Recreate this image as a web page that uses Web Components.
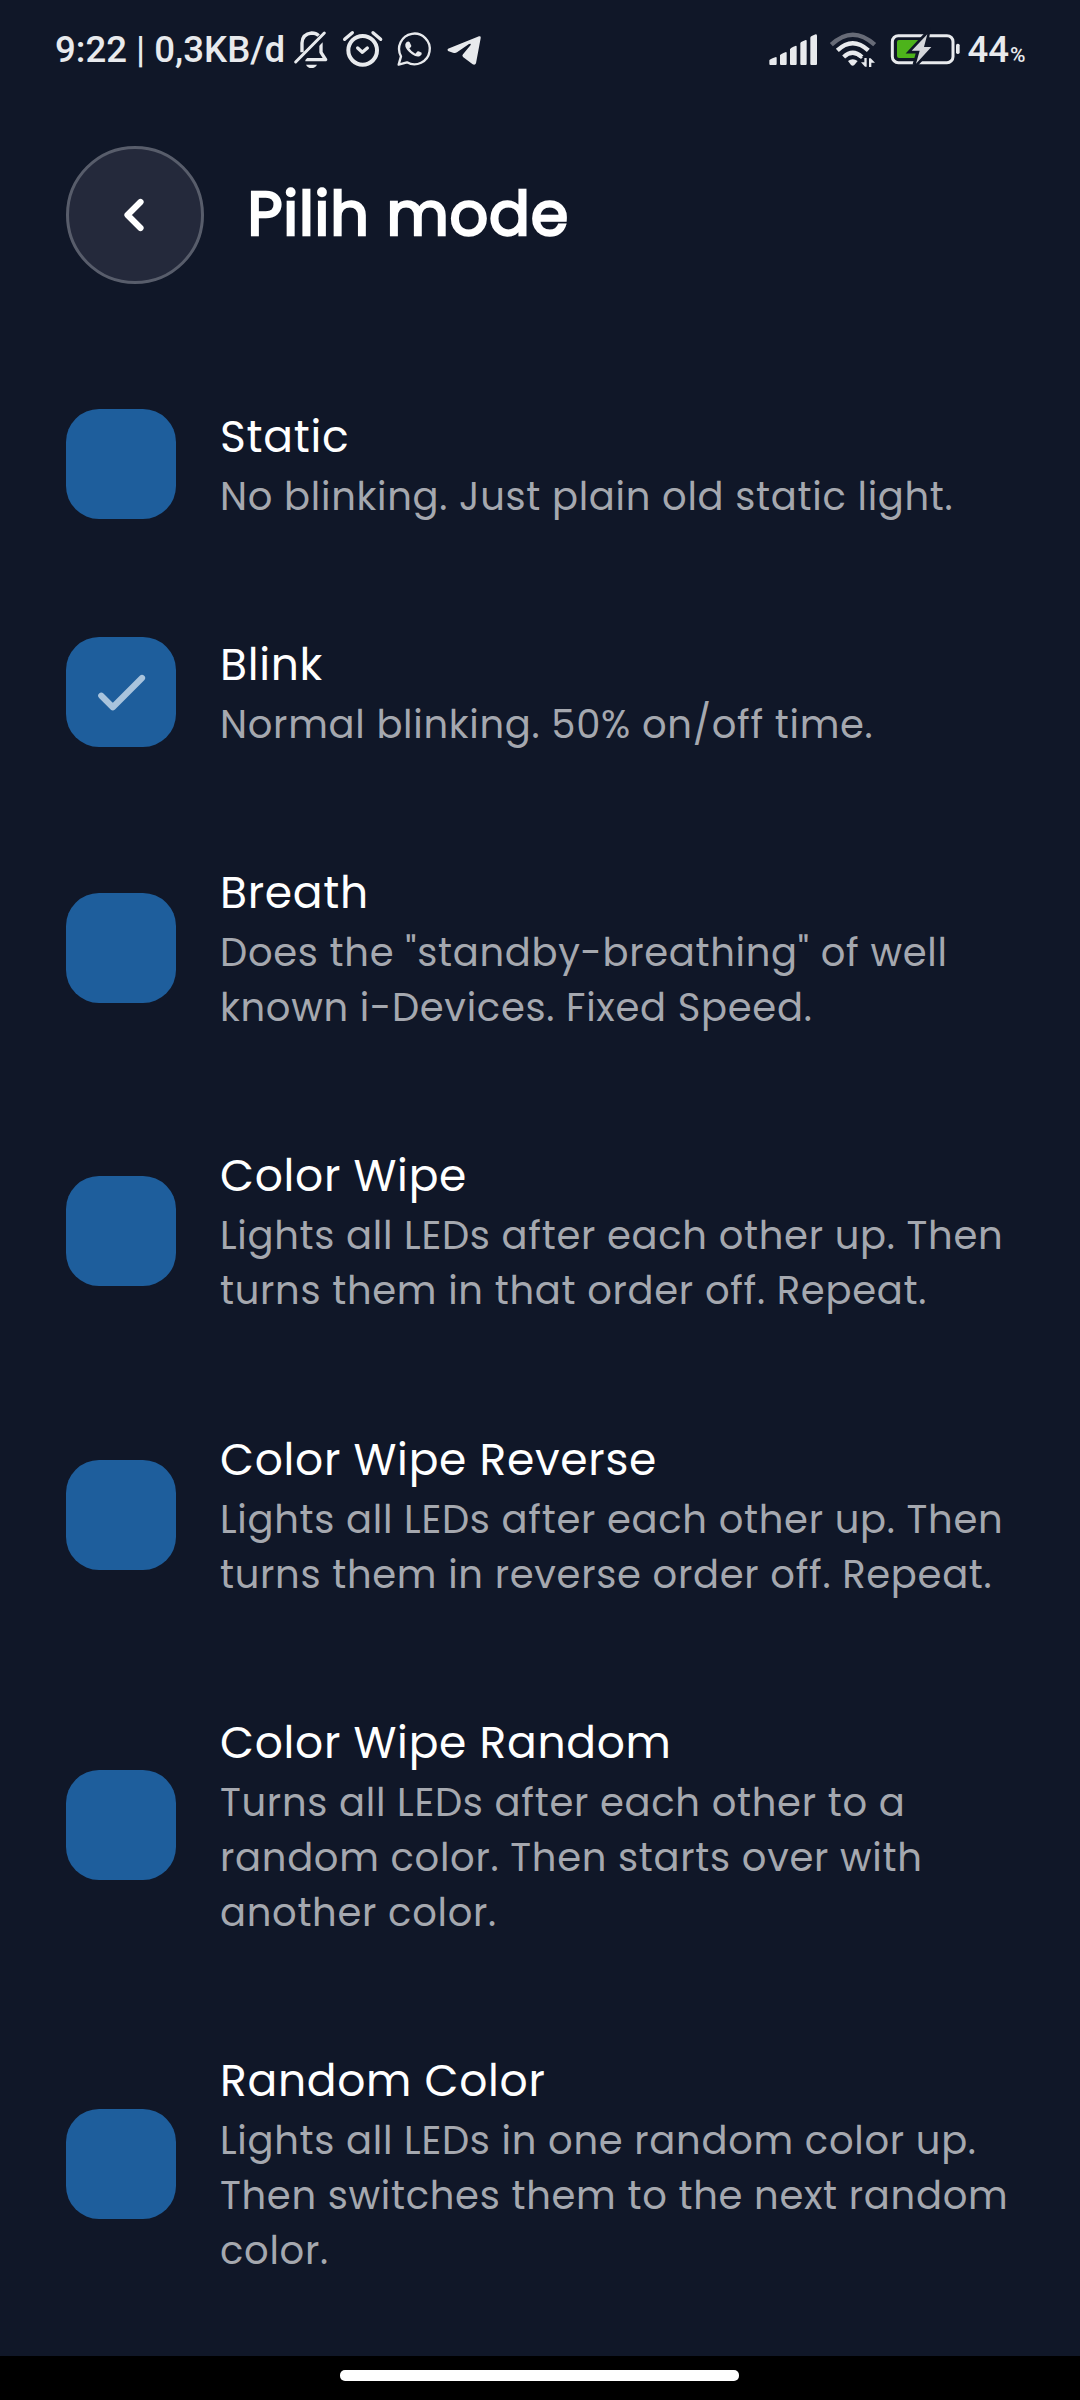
<!DOCTYPE html>
<html lang="id">
<head>
<meta charset="utf-8">
<title>Pilih mode</title>
<style>
html,body{margin:0;background:#101728}
body{font-family:Poppins,Inter,"Noto Sans",sans-serif;color:#fff}
</style>
</head>
<body>
<app-screen>
  <status-bar slot="status"></status-bar>
  <page-header slot="header">Pilih mode</page-header>
  <mode-item><span slot="title">Static</span>No blinking. Just plain old static light.</mode-item>
  <mode-item checked><span slot="title">Blink</span>Normal blinking. 50% on/off time.</mode-item>
  <mode-item><span slot="title">Breath</span>Does the "standby-breathing" of well known i-Devices. Fixed Speed.</mode-item>
  <mode-item><span slot="title">Color Wipe</span>Lights all LEDs after each other up. Then turns them in that order off. Repeat.</mode-item>
  <mode-item><span slot="title">Color Wipe Reverse</span>Lights all LEDs after each other up. Then turns them in reverse order off. Repeat.</mode-item>
  <mode-item><span slot="title">Color Wipe Random</span>Turns all LEDs after each other to a random color. Then starts over with another color.</mode-item>
  <mode-item><span slot="title">Random Color</span>Lights all LEDs in one random color up. Then switches them to the next random color.</mode-item>
  <gesture-bar slot="nav"></gesture-bar>
</app-screen>
<script>
const define = (name, html, connected) => customElements.define(name, class extends HTMLElement {
  constructor() {
    super();
    this.attachShadow({mode: 'open'}).innerHTML = html;
  }
  connectedCallback() { if (connected) connected.call(this); }
});

const ICONS = {
  bell: [36, 120, `<path d="M66 112V84Q67 57 95 54Q108 54 116 62M123 82V112L137 134H76" fill="none" stroke="#e8eaed" stroke-width="10" stroke-linejoin="round"/><path d="M55 150 141 62" stroke="#101728" stroke-width="9"/><path d="M47 141 133 54" stroke="#e8eaed" stroke-width="9" stroke-linecap="round"/><path d="M78 149H111Q106 159 94 159Q83 159 78 149Z"/>`],
  alarm: [186, 126, `<g fill="none" stroke="#e8eaed" stroke-linecap="round" stroke-linejoin="round"><circle cx="248" cy="106" r="43" stroke-width="12"/><path d="M194 73 217 53M279 53 302 73" stroke-width="10"/><path d="M233 99 247 112 262 99" stroke-width="10"/></g>`],
  whatsapp: [345, 114, `<path d="M356 149 363 124A46 46 0 1 1 381 142Z" fill="none" stroke="#e8eaed" stroke-width="7" stroke-linejoin="round"/><path d="M380 81Q386 77 389 82L394 92Q395 95 388 100Q394 111 406 116L413 109Q416 107 425 113Q427 119 420 123Q411 128 396 118Q379 106 376 94Q374 86 380 81Z"/>`],
  telegram: [495, 114, `<path d="M504 101 597 64Q604 62 602 70L588 145Q585 152 578 148L549 126Q545 122 549 118L572 90Q574 84 567 87L531 112Q526 116 519 113L504 108Q501 104 504 101Z"/>`],
  signal: [54, 150, `<path d="M58 136Q58 133 78 126Q80 126 80 129V147Q80 150 77 150H61Q58 150 58 147ZM90 121Q90 118 108 111Q110 111 110 114V147Q110 150 107 150H93Q90 150 90 147ZM120 103Q120 99 138 92Q140 92 140 95V147Q140 150 137 150H123Q120 150 120 147ZM151 85Q151 81 167 75Q170 74 170 78V147Q170 150 167 150H154Q151 150 151 147ZM181 68Q181 64 197 58Q201 58 201 62V147Q201 150 198 150H184Q181 150 181 147Z"/>`],
  wifi: [237, 144, `<g fill="none" stroke-width="13"><path d="M244 89Q308 29 374 89" stroke="#676b77"/><path d="M262 106Q308 63 355 106" stroke="#e8eaed"/><path d="M281 126Q308 101 336 126" stroke="#e8eaed"/></g><path d="M294 138Q308 128 323 138L313 150Q308 154 303 150Z"/><path d="M330 123H380V160H330Z" fill="#101728"/><path d="M343 129H350V155H345L333 142H343ZM357 156V130H362L375 143H364V156Z"/><path d="M317 120 326 116 339 126 333 132Z"/>`],
  battery: [420, 216, `<rect x="427" y="62" width="182" height="81" rx="18" fill="none" stroke="#e8eaed" stroke-width="9"/><path d="M447 75H524L498 129H447Q441 129 441 123V81Q441 75 447 75Z" fill="#4db31b"/><rect x="618" y="86" width="11" height="31" rx="5"/><path d="M532 56 484 108H507L495 150 548 94H526Z" fill="#101728" stroke="#101728" stroke-width="15"/><path d="M532 58 485 107H509L498 146 544 96H522Z" fill="#d5d7db"/>`]
};
define('status-icon', `<style>:host{display:block}svg{display:block}</style>`, function () {
  const [x, w, art] = ICONS[this.getAttribute('name')];
  const holder = document.createElement('div');
  holder.innerHTML = `<svg width="${w / 3}" height="46" viewBox="${x} 36 ${w} 138" fill="#e8eaed">${art}</svg>`;
  this.shadowRoot.replaceChildren(...this.shadowRoot.querySelectorAll('style'), holder.firstChild);
});

define('status-bar', `<style>
:host{display:flex;justify-content:space-between;height:119px;padding:27px 54.5px 0 55px;box-sizing:border-box;font:500 36.6px/46px Roboto,sans-serif;color:#e8eaed}
div{display:flex;height:46px;white-space:nowrap}
.left{gap:10px}.clock{width:227px}
.left status-icon:nth-of-type(2){margin-right:1px}
.left status-icon:nth-of-type(3){margin-right:2px}
.right{align-items:baseline}.right status-icon{align-self:flex-start;margin-right:11px}
.right status-icon:nth-of-type(2){margin-right:13px}.right status-icon:nth-of-type(3){margin-right:5px}
.pct{font-size:21px;margin-left:1px}
</style><div class="left"><span class="clock">9:22 | 0,3KB/d</span><status-icon name="bell"></status-icon><status-icon name="alarm"></status-icon><status-icon name="whatsapp"></status-icon><status-icon name="telegram"></status-icon></div>
<div class="right"><status-icon name="signal"></status-icon><status-icon name="wifi"></status-icon><status-icon name="battery"></status-icon><span>44</span><span class="pct">%</span></div>`);

define('back-button', `<style>:host{display:flex;flex:none;width:138px;height:138px;box-sizing:border-box;border:3px solid #585d6b;border-radius:50%;background:#24293b;align-items:center;justify-content:center}svg{display:block}</style>
<svg width="22" height="40" viewBox="124 195 22 40"><path d="M140.5 202 127.5 215 140.5 228" fill="none" stroke="#fff" stroke-width="6.2" stroke-linecap="round" stroke-linejoin="round"/></svg>`);

define('page-header', `<style>
:host{display:flex;align-items:center;gap:43.5px;padding:27px 66px 66px;height:138px}
h1{margin:0;padding-bottom:3px;font-size:60.5px;font-weight:400;letter-spacing:.75px;line-height:90px;-webkit-text-stroke:2.4px #fff;paint-order:stroke}
</style><back-button></back-button><h1><slot></slot></h1>`);

define('mode-box', `<style>:host{display:block;flex:none;width:110px;height:110px;border-radius:33px;background:#1e5e9c}svg{display:block}path{display:none}:host([checked]) path{display:inline}</style>
<svg width="110" height="110"><path d="M35.3 58.7 46.8 70.2 76 41" fill="none" stroke="#a9c4dd" stroke-width="6.2" stroke-linecap="round" stroke-linejoin="round"/></svg>`);

define('mode-item', `<style>
:host{display:flex;align-items:center;gap:44px;padding:0 60px 0 66px}
.text{flex:1;padding:56.6px 0 54.65px;letter-spacing:.7px}
.title{font-size:44px;line-height:60px;margin-bottom:2px}
.desc{font-size:38.5px;line-height:55px;color:#a5a8af}
</style><mode-box></mode-box><div class="text"><div class="title"><slot name="title"></slot></div><div class="desc"><slot></slot></div></div>`, function () {
  this.shadowRoot.querySelector('mode-box').toggleAttribute('checked', this.hasAttribute('checked'));
});

define('gesture-bar', `<style>:host{display:flex;justify-content:center;height:44px;padding:14px 1px 0 0;box-sizing:border-box;background:#000}div{width:399px;height:11px;border-radius:5px;background:#fff}</style><div></div>`);

define('app-screen', `<style>:host{display:flex;flex-direction:column;width:1080px;height:2400px;background:#101728;overflow:hidden}main{flex:1;min-height:0;overflow:hidden}</style><slot name="status"></slot><slot name="header"></slot><main><slot></slot></main><slot name="nav"></slot>`);
</script>
</body>
</html>
